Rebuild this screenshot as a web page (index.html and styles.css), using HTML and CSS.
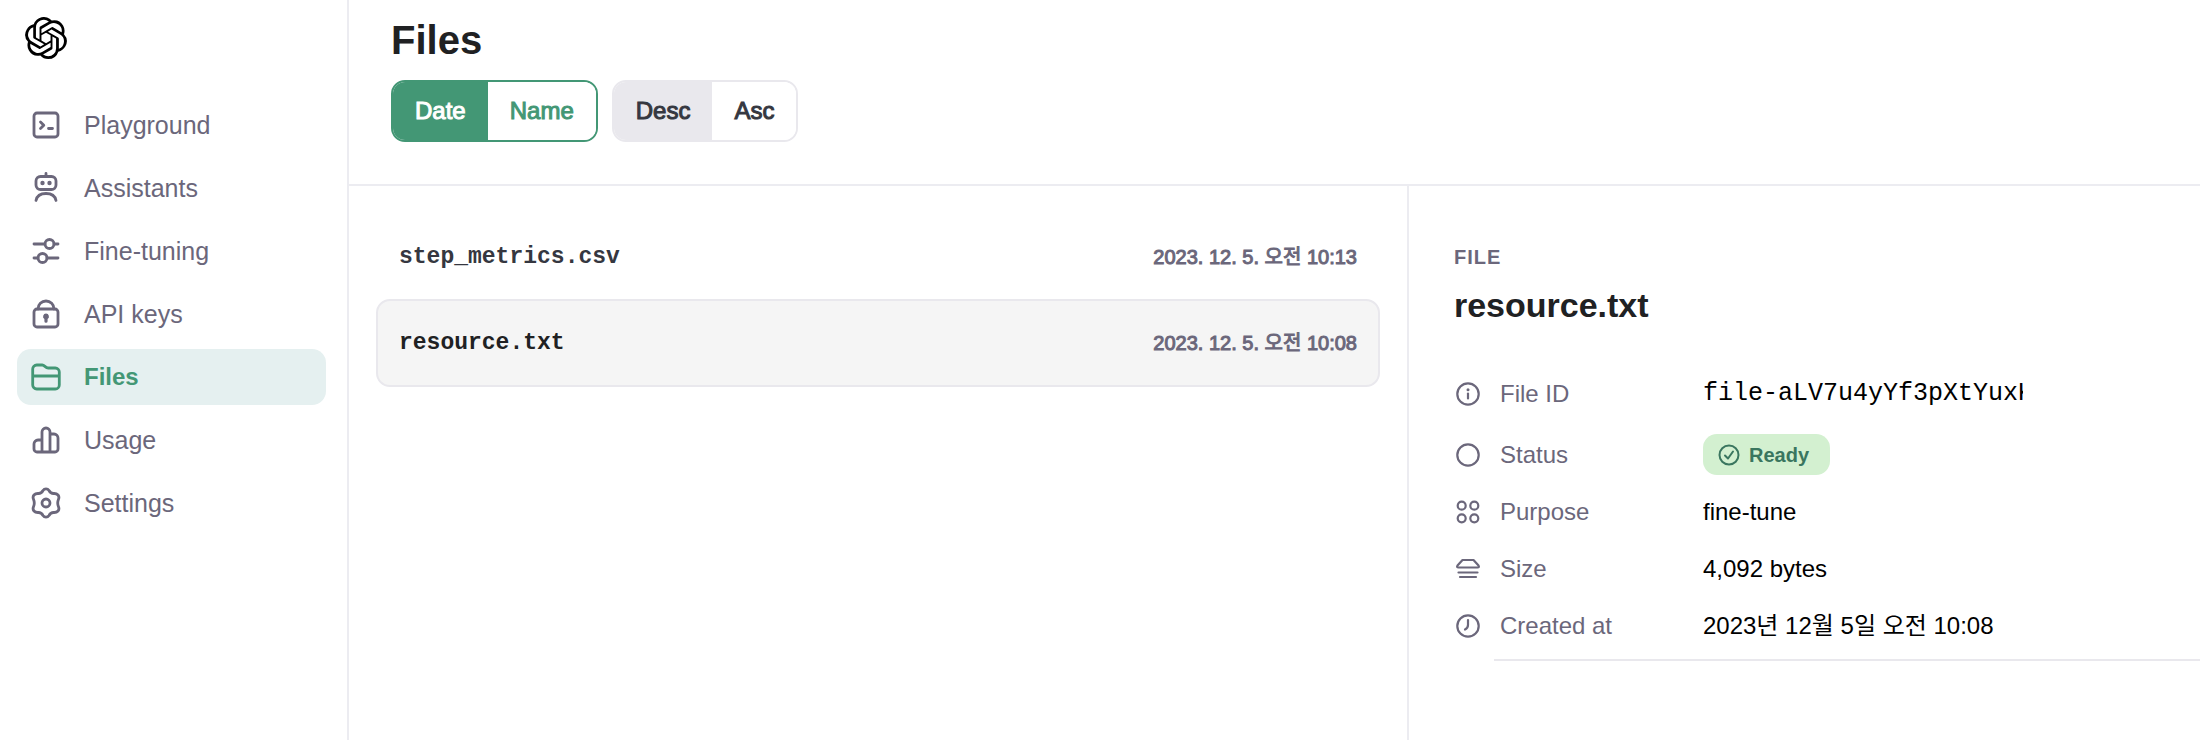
FILE: index.html
```html
<!DOCTYPE html>
<html lang="ko">
	<head>
		<meta charset="UTF-8" />
		<meta name="viewport" content="width=device-width, initial-scale=1.0" />
		<link rel="stylesheet" href="styles.css" />
		<title>Files</title>
	</head>
	<body>
		<div class="app">
			<aside class="sidebar">
				<a href="#" class="logo" aria-label="Home">
					<svg viewBox="0 0 24 24" width="42" height="42" fill="#000">
						<path d="M22.2819 9.8211a5.9847 5.9847 0 0 0-.5157-4.9108 6.0462 6.0462 0 0 0-6.5098-2.9A6.0651 6.0651 0 0 0 4.9807 4.1818a5.9847 5.9847 0 0 0-3.9977 2.9 6.0462 6.0462 0 0 0 .7427 7.0966 5.98 5.98 0 0 0 .511 4.9107 6.051 6.051 0 0 0 6.5146 2.9001A5.9847 5.9847 0 0 0 13.2599 24a6.0557 6.0557 0 0 0 5.7718-4.2058 5.9894 5.9894 0 0 0 3.9977-2.9001 6.0557 6.0557 0 0 0-.7475-7.0729zm-9.022 12.6081a4.4755 4.4755 0 0 1-2.8764-1.0408l.1419-.0804 4.7783-2.7582a.7948.7948 0 0 0 .3927-.6813v-6.7369l2.02 1.1686a.071.071 0 0 1 .038.052v5.5826a4.504 4.504 0 0 1-4.4945 4.4944zm-9.6607-4.1254a4.4708 4.4708 0 0 1-.5346-3.0137l.142.0852 4.783 2.7582a.7712.7712 0 0 0 .7806 0l5.8428-3.3685v2.3324a.0804.0804 0 0 1-.0332.0615L9.74 19.9502a4.4992 4.4992 0 0 1-6.1408-1.6464zM2.3408 7.8956a4.485 4.485 0 0 1 2.3655-1.9728V11.6a.7664.7664 0 0 0 .3879.6765l5.8144 3.3543-2.0201 1.1685a.0757.0757 0 0 1-.071 0l-4.8303-2.7865A4.504 4.504 0 0 1 2.3408 7.872zm16.5963 3.8558L13.1038 8.364 15.1192 7.2a.0757.0757 0 0 1 .071 0l4.8303 2.7913a4.4944 4.4944 0 0 1-.6765 8.1042v-5.6772a.79.79 0 0 0-.407-.667zm2.0107-3.0231l-.142-.0852-4.7735-2.7818a.7759.7759 0 0 0-.7854 0L9.409 9.2297V6.8974a.0662.0662 0 0 1 .0284-.0615l4.8303-2.7866a4.4992 4.4992 0 0 1 6.6802 4.66zM8.3065 12.863l-2.02-1.1638a.0804.0804 0 0 1-.038-.0567V6.0742a4.4992 4.4992 0 0 1 7.3757-3.4537l-.142.0805L8.704 5.459a.7948.7948 0 0 0-.3927.6813zm1.0976-2.3654l2.602-1.4998 2.6069 1.4998v2.9994l-2.5974 1.4997-2.6067-1.4997Z" />
					</svg>
				</a>
				<nav class="nav">
					<a href="#" class="nav-link">
						<svg class="icon" viewBox="0 0 32 32">
							<rect x="4" y="4" width="24" height="24" rx="3" />
							<path d="M10.5 13l3.3 3.3-3.3 3.3M18.5 19.5h4" />
						</svg>
						Playground
					</a>
					<a href="#" class="nav-link">
						<svg class="icon" viewBox="0 0 32 32">
							<rect x="6" y="4.5" width="20" height="13" rx="4.5" />
							<path d="M16 1.5v3M6 28.5c1-5 5-7 10-7s9 2 10 7" />
							<circle class="dot" cx="12.5" cy="11" r="2.2" />
							<circle class="dot" cx="19.5" cy="11" r="2.2" />
						</svg>
						Assistants
					</a>
					<a href="#" class="nav-link">
						<svg class="icon" viewBox="0 0 32 32">
							<circle cx="19.5" cy="9" r="4.5" />
							<circle cx="12.5" cy="23" r="4.5" />
							<path d="M4 9h11M24 9h4M4 23h4M17 23h11" />
						</svg>
						Fine-tuning
					</a>
					<a href="#" class="nav-link">
						<svg class="icon" viewBox="0 0 32 32">
							<rect x="4" y="11" width="24" height="18" rx="3" />
							<path d="M8 11a8 8 0 0 1 16 0" />
							<path class="dot" d="M16 15.5a3 3 0 0 0-1.6 5.5v2.2a1.6 1.6 0 0 0 3.2 0V21a3 3 0 0 0-1.6-5.5z" />
						</svg>
						API keys
					</a>
					<a href="#" class="nav-link active">
						<svg class="icon" viewBox="0 0 32 32">
							<path d="M2.700 8a4 4 0 0 1 4-4h5.500c2.500 0 3 3 6 3H25.300a4 4 0 0 1 4 4V24a4 4 0 0 1-4 4H6.700a4 4 0 0 1-4-4zM2.700 15h26.600" />
						</svg>
						Files
					</a>
					<a href="#" class="nav-link">
						<svg class="icon" viewBox="0 0 32 32">
							<path d="M12 28V8a4 4 0 0 1 8 0v20M12 16H8a4 4 0 0 0-4 4v5a3 3 0 0 0 3 3h18a3 3 0 0 0 3-3V14a4 4 0 0 0-4-4h-4" />
						</svg>
						Usage
					</a>
					<a href="#" class="nav-link">
						<svg class="icon" viewBox="0 0 32 32">
							<path d="M13 3.500c1.500-2.200 4.500-2.200 6 0 1.200 2.200 2.200 3.100 4.700 3 3.700-.2 6.200 2.400 4.800 5.700-1 2.400-1 5.200 0 7.600 1.400 3.300-1.100 5.900-4.800 5.700-2.500-.1-3.500.8-4.700 3-1.500 2.200-4.500 2.200-6 0-1.200-2.200-2.200-3.100-4.700-3-3.700.2-6.200-2.400-4.800-5.700 1-2.400 1-5.200 0-7.600-1.400-3.300 1.100-5.900 4.800-5.700 2.500.1 3.500-.8 4.700-3z" />
							<circle cx="16" cy="16" r="4" />
						</svg>
						Settings
					</a>
				</nav>
			</aside>

			<main class="main">
				<header class="header">
					<h1 class="title">Files</h1>
					<div class="filters">
						<div class="toggle green">
							<button type="button" class="toggle-button on">Date</button
							><button type="button" class="toggle-button">Name</button>
						</div>
						<div class="toggle">
							<button type="button" class="toggle-button on">Desc</button
							><button type="button" class="toggle-button">Asc</button>
						</div>
					</div>
				</header>

				<div class="content">
					<section class="files">
						<a href="#" class="file">
							<span class="file-name">step_metrics.csv</span>
							<span class="file-date">2023. 12. 5. 오전 10:13</span>
						</a>
						<a href="#" class="file selected">
							<span class="file-name">resource.txt</span>
							<span class="file-date">2023. 12. 5. 오전 10:08</span>
						</a>
					</section>

					<section class="details">
						<div class="eyebrow">FILE</div>
						<h2 class="details-title">resource.txt</h2>
						<dl class="info">
							<div class="row first">
								<dt class="label">
									<svg class="icon small" viewBox="0 0 28 28">
										<circle cx="14" cy="14" r="10.7" />
										<path d="M14 13.500v5" />
										<circle class="dot" cx="14" cy="9.800" r="1.500" />
									</svg>
									File ID
								</dt>
								<dd class="value file-id">file-aLV7u4yYf3pXtYuxK</dd>
							</div>
							<div class="row">
								<dt class="label">
									<svg class="icon small" viewBox="0 0 28 28">
										<circle cx="14" cy="14" r="10.7" />
									</svg>
									Status
								</dt>
								<dd class="value">
									<span class="badge">
										<svg class="badge-icon" viewBox="0 0 24 24">
											<circle cx="12" cy="12" r="9.5" />
											<path d="M8 12.500l3 3 5-7" />
										</svg>
										Ready
									</span>
								</dd>
							</div>
							<div class="row">
								<dt class="label">
									<svg class="icon small" viewBox="0 0 28 28">
										<circle cx="7.700" cy="7.700" r="4" />
										<circle cx="20.300" cy="7.700" r="4" />
										<circle cx="7.700" cy="20.300" r="4" />
										<circle cx="20.300" cy="20.300" r="4" />
									</svg>
									Purpose
								</dt>
								<dd class="value">fine-tune</dd>
							</div>
							<div class="row">
								<dt class="label">
									<svg class="icon small" viewBox="0 0 28 28">
										<path d="M8.500 5h11l5 5.500c.8 1.200.4 2-1 2h-19c-1.400 0-1.800-.8-1-2zM4.500 17.500h19M6 22h16" />
									</svg>
									Size
								</dt>
								<dd class="value">4,092 bytes</dd>
							</div>
							<div class="row">
								<dt class="label">
									<svg class="icon small" viewBox="0 0 28 28">
										<circle cx="14" cy="14" r="10.7" />
										<path d="M14 8v5c0 2-1 3.500-3 4.500" />
									</svg>
									Created at
								</dt>
								<dd class="value">2023년 12월 5일 오전 10:08</dd>
							</div>
						</dl>
						<hr class="divider" />
					</section>
				</div>
			</main>
		</div>
	</body>
</html>
```

FILE: styles.css
```css
* {
	padding: 0;
	margin: 0;
	box-sizing: border-box;
}

body {
	font-family: 'Liberation Sans', 'Noto Sans CJK KR', sans-serif;
	font-size: 24px;
	line-height: 32px;
	color: #000;
	background-color: #fff;
}

a {
	color: inherit;
	text-decoration: none;
}

.app {
	display: flex;
	min-height: 100vh;
}

/* sidebar */
.sidebar {
	flex: none;
	width: 349px;
	padding: 17px 21px 16px 17px;
	border-right: 2px solid #ececf1;
}

.logo {
	display: block;
	height: 80px;
	padding-left: 8px;
}

.logo svg {
	display: block;
}

.nav {
	display: flex;
	flex-direction: column;
	gap: 7px;
}

.nav-link {
	display: flex;
	align-items: center;
	gap: 22px;
	height: 56px;
	padding: 0 13px;
	border-radius: 14px;
	font-size: 25px;
	color: #6b677b;
}

.nav-link.active {
	color: #439775;
	background-color: #e5f0f0;
	font-size: 24px;
	font-weight: bold;
}

.icon {
	flex: none;
	width: 32px;
	height: 32px;
	fill: none;
	stroke: currentColor;
	stroke-width: 2.8;
	stroke-linecap: round;
	stroke-linejoin: round;
}

.icon.small {
	width: 28px;
	height: 28px;
	stroke-width: 2.2;
}

.icon .dot {
	fill: currentColor;
	stroke: none;
}

/* main */
.main {
	flex: 1;
	min-width: 0;
	display: flex;
	flex-direction: column;
}

.header {
	padding: 16px 42px 42px;
	border-bottom: 2px solid #ececf1;
}

.title {
	font-size: 40px;
	line-height: 48px;
	color: #202123;
}

.filters {
	display: flex;
	gap: 14px;
	margin-top: 16px;
}

.toggle {
	display: flex;
	height: 62px;
	border: 2px solid #e9e8ed;
	border-radius: 14px;
	overflow: hidden;
}

.toggle-button {
	padding: 0 22px;
	border: none;
	background-color: #fff;
	color: #353740;
	font-family: inherit;
	font-size: 24px;
	-webkit-text-stroke: 1px;
	cursor: pointer;
}

.toggle-button.on {
	background-color: #e9e8ed;
}

.toggle.green {
	border-color: #439775;
}

.toggle.green .toggle-button {
	color: #439775;
}

.toggle.green .on {
	color: #fff;
	background-color: #439775;
}

.content {
	flex: 1;
	display: grid;
	grid-template-columns: 1.34fr 1fr;
}

/* file list */
.files {
	padding: 27px;
	border-right: 2px solid #ececf1;
}

.file {
	display: flex;
	justify-content: space-between;
	align-items: center;
	height: 88px;
	padding: 0 21px;
	border: 2px solid transparent;
	border-radius: 14px;
}

.file + .file {
	margin-top: -2px;
}

.file.selected {
	border-color: #e9e8ed;
	background-color: #f5f5f5;
}

.file-name {
	font-family: 'Liberation Mono', monospace;
	font-size: 23px;
	font-weight: bold;
	color: #353740;
}

.selected .file-name {
	color: #202123;
}

.file-date {
	font-size: 20px;
	color: #6b677b;
	-webkit-text-stroke: 1px;
}

/* file details */
.details {
	min-width: 0;
	padding: 55px 0 0 45px;
}

.eyebrow {
	font-size: 20px;
	font-weight: bold;
	letter-spacing: 1px;
	color: #6b677b;
}

.details-title {
	margin-top: 12px;
	font-size: 34px;
	line-height: 40px;
	color: #202123;
}

.info {
	margin-top: 40px;
}

.row {
	display: flex;
	align-items: center;
	min-height: 57px;
}

.row.first {
	margin-bottom: 4px;
}

.label {
	display: flex;
	align-items: center;
	gap: 18px;
	width: 249px;
	color: #6b677b;
}

/* long ids are clipped */
.file-id {
	width: 320px;
	overflow: hidden;
	white-space: nowrap;
	font-family: 'Liberation Mono', monospace;
	font-size: 25px;
}

.badge {
	display: flex;
	align-items: center;
	gap: 8px;
	height: 41px;
	padding: 0 21px 0 14px;
	border-radius: 14px;
	background-color: #d3f0d0;
	color: #3a765f;
	font-size: 20px;
	font-weight: bold;
}

.badge-icon {
	width: 24px;
	height: 24px;
	fill: none;
	stroke: currentColor;
	stroke-width: 2;
	stroke-linecap: round;
	stroke-linejoin: round;
}

.divider {
	margin: 5px 0 0 40px;
	border: none;
	border-top: 2px solid #e9e8ed;
}
```
